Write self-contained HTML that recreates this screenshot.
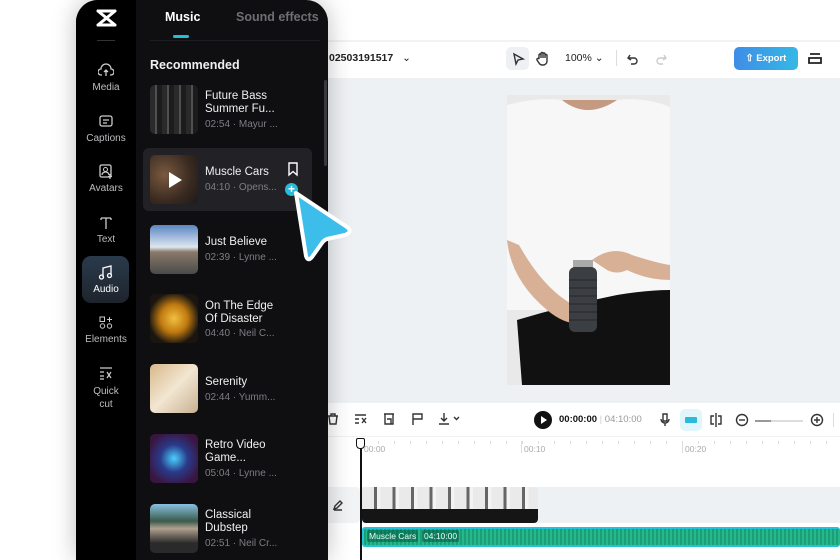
<!DOCTYPE html>
<html><head><meta charset="utf-8">
<style>
*{margin:0;padding:0;box-sizing:border-box}
body{width:840px;height:560px;overflow:hidden;background:#fff;font-family:"Liberation Sans",sans-serif;position:relative}
.abs{position:absolute}
#panel{left:76px;top:0;width:252px;height:560px;background:#0f0f11;border-radius:22px 22px 0 0;overflow:hidden;box-shadow:0 0 24px rgba(0,0,0,.25)}
#side{left:0;top:0;width:60px;height:560px;background:#000}
.nav{position:absolute;left:0;width:60px;text-align:center;color:#bdbdc2;font-size:10px}
.nav svg{display:block;margin:0 auto 4px}
.row{position:absolute;left:74px;width:170px;height:50px}
.th{position:absolute;left:0;top:0;width:48px;height:49px;border-radius:5px}
.t{position:absolute;left:55px;color:#f0f0f2;font-size:11.5px;line-height:13px;width:80px}
.m{position:absolute;left:55px;color:#7d7d84;font-size:10px;white-space:nowrap}
.ic{stroke:#333;fill:none;stroke-width:1.4}
</style></head><body>

<div class="abs" style="left:0;top:0;width:840px;height:40px;background:#fff"></div>
<div class="abs" style="left:328px;top:40px;width:512px;height:2px;background:#f2f2f4"></div>
<div class="abs" style="left:328px;top:42px;width:512px;height:36px;background:#fff"></div>
<div class="abs" style="left:329px;top:52px;font-size:10.5px;font-weight:bold;color:#222">02503191517 <span style="font-weight:normal;margin-left:6px">&#8964;</span></div>
<div class="abs" style="left:506px;top:47px;width:23px;height:23px;background:#eef0f3;border-radius:5px"></div>
<svg class="abs" style="left:511px;top:52px" width="14" height="14"><path class="ic" d="M3 2 L12 7 L7 8 L5 12 Z"/></svg>
<svg class="abs" style="left:535px;top:51px" width="15" height="15"><path class="ic" d="M4 8 V4 a1 1 0 0 1 2 0 V7 V2.5 a1 1 0 0 1 2 0 V7 V3 a1 1 0 0 1 2 0 V7 V4.5 a1 1 0 0 1 2 0 V10 a4 4 0 0 1 -4 4 H7 a4 4 0 0 1 -3 -2 L2 9 a1 1 0 0 1 2 -1z"/></svg>
<div class="abs" style="left:565px;top:52px;font-size:10.5px;color:#222">100% &#8964;</div>
<div class="abs" style="left:616px;top:50px;width:1px;height:16px;background:#ddd"></div>
<svg class="abs" style="left:626px;top:52px" width="14" height="14"><path class="ic" d="M4 3 L2 6 L5 8 M2 6 H8 a3 3 0 0 1 0 6 H5"/></svg>
<svg class="abs" style="left:654px;top:52px" width="14" height="14"><path d="M10 3 L12 6 L9 8 M12 6 H6 a3 3 0 0 0 0 6 H9" stroke="#ccc" fill="none" stroke-width="1.4"/></svg>
<div class="abs" style="left:734px;top:47px;width:64px;height:23px;border-radius:5px;background:linear-gradient(90deg,#3f8de6,#35b8e6);color:#fff;font-size:9.5px;font-weight:bold;text-align:center;line-height:23px">&#8679; Export</div>
<svg class="abs" style="left:807px;top:51px" width="16" height="16"><path d="M3 3 H13 M2 7 H14 V12 H2 Z" stroke="#222" fill="none" stroke-width="1.8"/></svg>

<div class="abs" style="left:328px;top:78px;width:512px;height:325px;background:#eef1f4"></div>
<svg class="abs" style="left:507px;top:95px" width="163" height="290" viewBox="0 0 163 290">
<rect width="163" height="290" fill="#e9e9ea"/>
<path d="M0 10 Q30 2 55 5 Q80 25 110 5 Q140 2 163 12 V215 H0Z" fill="#f7f7f7"/>
<path d="M55 5 Q80 25 110 5 Z" fill="#c49a80"/>
<path d="M10 225 Q60 210 110 200 Q140 195 163 195 V290 H15Z" fill="#111"/>
<path d="M0 145 Q4 185 40 215 Q60 232 80 228 Q92 220 75 214 Q40 200 12 150Z" fill="#d8b096"/>
<path d="M85 165 Q105 150 125 160 Q150 168 163 170 V185 Q140 185 120 175 Q110 180 100 175Z" fill="#d8b096"/>
<rect x="66" y="165" width="20" height="8" fill="#aaa"/>
<rect x="62" y="172" width="28" height="65" rx="6" fill="#3b3e42"/>
<g stroke="#2a2c2f" stroke-width="1.2"><path d="M62 185H90M62 193H90M62 201H90M62 209H90M62 217H90M62 225H90"/></g>
</svg>

<div class="abs" style="left:328px;top:403px;width:512px;height:157px;background:#fff"></div>
<svg class="abs" style="left:326px;top:412px" width="14" height="14"><path class="ic" d="M2 4H12M5 4V2H9V4M3 4L4 12H10L11 4"/></svg>
<svg class="abs" style="left:353px;top:412px" width="16" height="14"><path class="ic" d="M2 3H13M2 7H6M2 11H6M9 6L13 11M13 6L9 11"/></svg>
<svg class="abs" style="left:382px;top:412px" width="14" height="14"><path class="ic" d="M2 2H12M3 2V12H11V2M5 7H9V12"/></svg>
<svg class="abs" style="left:410px;top:412px" width="14" height="14"><path class="ic" d="M3 13V2H12V7H3"/></svg>
<svg class="abs" style="left:437px;top:411px" width="26" height="16"><path class="ic" d="M7 2V10M4 7L7 10L10 7M2 13H12M17 6L19.5 8.5L22 6"/></svg>
<div class="abs" style="left:534px;top:411px;width:18px;height:18px;border-radius:50%;background:#111"></div>
<div class="abs" style="left:541px;top:416px;width:0;height:0;border-left:6px solid #fff;border-top:4px solid transparent;border-bottom:4px solid transparent"></div>
<div class="abs" style="left:559px;top:414px;font-size:9.5px;font-weight:bold;color:#111">00:00:00 <span style="color:#ccc;font-weight:normal">|</span> <span style="color:#999;font-weight:normal">04:10:00</span></div>
<svg class="abs" style="left:658px;top:412px" width="14" height="16"><path class="ic" d="M5 2H9V9H5ZM3 7a4 4 0 0 0 8 0M7 11V14"/></svg>
<div class="abs" style="left:680px;top:409px;width:22px;height:22px;border-radius:5px;background:#e0f6fb"></div>
<div class="abs" style="left:685px;top:417px;width:12px;height:6px;background:#2bb9dc;border-radius:1px"></div>
<svg class="abs" style="left:708px;top:412px" width="16" height="16"><path class="ic" d="M8 1V15M6 4H3V12H6M10 4H13V12H10"/></svg>
<svg class="abs" style="left:734px;top:412px" width="16" height="16"><circle cx="8" cy="8" r="5.5" class="ic"/><path class="ic" d="M5 8H11"/></svg>
<div class="abs" style="left:755px;top:420px;width:48px;height:2px;background:#ddd"></div>
<div class="abs" style="left:755px;top:420px;width:16px;height:2px;background:#999"></div>
<svg class="abs" style="left:809px;top:412px" width="16" height="16"><circle cx="8" cy="8" r="5.5" class="ic"/><path class="ic" d="M5 8H11M8 5V11"/></svg>
<div class="abs" style="left:833px;top:413px;width:1px;height:14px;background:#ddd"></div>

<div class="abs" style="left:328px;top:436px;width:512px;height:1px;background:#f0f0f0"></div>
<div class="abs" style="left:364px;top:444px;font-size:8.5px;color:#aaa">00:00</div>
<div class="abs" style="left:524px;top:444px;font-size:8.5px;color:#aaa">00:10</div>
<div class="abs" style="left:685px;top:444px;font-size:8.5px;color:#aaa">00:20</div>
<div class="abs" style="left:521px;top:441px;width:1px;height:12px;background:#ddd"></div>
<div class="abs" style="left:682px;top:441px;width:1px;height:12px;background:#ddd"></div>
<div class="abs" style="left:362px;top:441px;width:470px;height:3px;background:repeating-linear-gradient(90deg,#ddd 0 1px,transparent 1px 16px)"></div>

<div class="abs" style="left:328px;top:487px;width:32px;height:36px;background:#f1f3f5;border-radius:0 4px 4px 0"></div>
<svg class="abs" style="left:332px;top:499px" width="12" height="12"><path class="ic" d="M2 10L3 7L8 2L10 4L5 9Z M2 11H10"/></svg>
<div class="abs" style="left:362px;top:487px;width:478px;height:36px;background:#eef1f4"></div>
<div class="abs" style="left:362px;top:487px;width:176px;height:36px;border-radius:4px;overflow:hidden;background:repeating-linear-gradient(90deg,#eaeaea 0 12px,#666 12px 15px,#f3f3f3 15px 18.5px);">
<div style="position:absolute;left:0;top:22px;width:176px;height:14px;background:#151515"></div>
</div>
<div class="abs" style="left:362px;top:527px;width:478px;height:20px;background:repeating-linear-gradient(90deg,#1a9f78 0 2px,#26b889 2px 4px);border:2px solid #22c3d8;border-right:none;border-radius:3px"></div>
<div class="abs" style="left:367px;top:530px;font-size:8.5px;color:#e6fff6;background:rgba(0,80,60,.5);padding:1px 2px;border-radius:2px">Muscle Cars</div>
<div class="abs" style="left:422px;top:530px;font-size:8.5px;color:#e6fff6;background:rgba(0,80,60,.5);padding:1px 2px;border-radius:2px">04:10:00</div>
<div class="abs" style="left:360px;top:444px;width:1.5px;height:116px;background:#111"></div>
<div class="abs" style="left:356px;top:438px;width:9px;height:11px;border:1.5px solid #111;border-radius:2px 2px 4px 4px;background:#fff"></div>

<div id="panel" class="abs">
 <div id="side" class="abs"></div>
 <svg class="abs" style="left:20px;top:9px" width="21" height="18"><path d="M2 2 L19 16 M19 2 L2 16 M2 2H19 M2 16H19" stroke="#fff" stroke-width="3" fill="none" stroke-linecap="round"/></svg>
 <div class="abs" style="left:21px;top:40px;width:18px;height:1px;background:#333"></div>
 <div class="nav" style="top:63px"><svg width="16" height="15"><path d="M4 12 H3 a3 3 0 0 1 0-6 a5 5 0 0 1 10 0 a3 3 0 0 1 0 6 H12 M8 13 V7 M6 9 L8 7 L10 9" stroke="#ccc" fill="none" stroke-width="1.3"/></svg>Media</div>
 <div class="nav" style="top:114px"><svg width="16" height="15"><rect x="2" y="2" width="12" height="10" rx="2" stroke="#ccc" fill="none" stroke-width="1.3"/><path d="M5 6H11M5 9H9" stroke="#ccc" stroke-width="1.3"/></svg>Captions</div>
 <div class="nav" style="top:164px"><svg width="16" height="15"><rect x="2" y="1" width="11" height="12" rx="1.5" stroke="#ccc" fill="none" stroke-width="1.3"/><circle cx="7.5" cy="5.5" r="2" stroke="#ccc" fill="none"/><path d="M4 11a3.5 3 0 0 1 7 0M12 10V15M10 12.5H14" stroke="#ccc" fill="none" stroke-width="1.3"/></svg>Avatars</div>
 <div class="nav" style="top:215px"><svg width="16" height="15"><path d="M3 3H13M8 3V14M3 3V5M13 3V5" stroke="#ccc" fill="none" stroke-width="1.3"/></svg>Text</div>
 <div class="abs" style="left:6px;top:256px;width:47px;height:47px;border-radius:9px;background:linear-gradient(#2a3a4c,#1e242c)"></div>
 <div class="nav" style="top:265px;color:#fff"><svg width="16" height="15"><path d="M5 12V3L13 1V10" stroke="#fff" fill="none" stroke-width="1.3"/><circle cx="3.5" cy="12" r="2" stroke="#fff" fill="none" stroke-width="1.3"/><circle cx="11.5" cy="10.5" r="2" stroke="#fff" fill="none" stroke-width="1.3"/></svg>Audio</div>
 <div class="nav" style="top:315px"><svg width="16" height="15"><rect x="2" y="2" width="4.5" height="4.5" stroke="#ccc" fill="none"/><circle cx="4.5" cy="11" r="2.2" stroke="#ccc" fill="none"/><circle cx="11.5" cy="11" r="2.2" stroke="#ccc" fill="none"/><path d="M9 4.5H14M11.5 2V7" stroke="#ccc"/></svg>Elements</div>
 <div class="nav" style="top:366px;line-height:13px"><svg width="16" height="15"><path d="M2 2H14M2 6H6M2 10H6M2 13H6M9 6L13 12M13 6L9 12" stroke="#ccc" fill="none" stroke-width="1.2"/></svg>Quick<br>cut</div>

 <div class="abs" style="left:89px;top:10px;color:#fff;font-size:12.5px;font-weight:bold">Music</div>
 <div class="abs" style="left:97px;top:35px;width:16px;height:3px;border-radius:2px;background:#1fc0d9"></div>
 <div class="abs" style="left:160px;top:10px;color:#6e6e74;font-size:12.5px;font-weight:bold;white-space:nowrap">Sound effects</div>
 <div class="abs" style="left:74px;top:40px;width:170px;height:1px;background:#1e1e22"></div>
 <div class="abs" style="left:74px;top:58px;color:#f0f0f2;font-size:12.5px;font-weight:bold">Recommended</div>
 <div class="abs" style="left:248px;top:80px;width:3px;height:86px;border-radius:2px;background:#3a3a3e"></div>

 <div class="abs" style="left:67px;top:148px;width:169px;height:63px;border-radius:6px;background:#222226"></div>

 <div class="row" style="top:85px"><div class="th" style="background:repeating-linear-gradient(90deg,#2a2a2a 0 5px,#505050 5px 7px,#1c1c1c 7px 12px)"></div><div class="t" style="top:5px">Future Bass Summer Fu...</div><div class="m" style="top:34px">02:54 · Mayur ...</div></div>
 <div class="row" style="top:155px"><div class="th" style="background:radial-gradient(circle at 30% 40%,#7a5a40,#3a2a20 60%,#1a1a18)"></div><div style="position:absolute;left:19px;top:17px;border-left:13px solid #fff;border-top:8px solid transparent;border-bottom:8px solid transparent"></div><div class="t" style="top:11px">Muscle Cars</div><div class="m" style="top:27px">04:10 · Opens...</div>
  <svg style="position:absolute;left:136px;top:6px" width="14" height="16"><path d="M3 2H11V14L7 10.5L3 14Z" stroke="#fff" fill="none" stroke-width="1.4"/></svg></div>
 <div class="row" style="top:225px"><div class="th" style="background:linear-gradient(#5a86c4 0,#dfe6ef 45%,#8a7a6a 55%,#4a4a4a 100%)"></div><div class="t" style="top:11px">Just Believe</div><div class="m" style="top:27px">02:39 · Lynne ...</div></div>
 <div class="row" style="top:294px"><div class="th" style="background:radial-gradient(ellipse at 50% 50%,#f2c040,#c07a10 40%,#1a1510 75%)"></div><div class="t" style="top:6px">On The Edge Of Disaster</div><div class="m" style="top:34px">04:40 · Neil C...</div></div>
 <div class="row" style="top:364px"><div class="th" style="background:linear-gradient(135deg,#d8b88a,#f2e6d2 50%,#c8b090)"></div><div class="t" style="top:12px">Serenity</div><div class="m" style="top:28px">02:44 · Yumm...</div></div>
 <div class="row" style="top:434px"><div class="th" style="background:radial-gradient(circle at 50% 50%,#4ad0ff,#2a3a8a 40%,#3a1540 80%)"></div><div class="t" style="top:5px">Retro Video Game...</div><div class="m" style="top:34px">05:04 · Lynne ...</div></div>
 <div class="row" style="top:504px"><div class="th" style="background:linear-gradient(#8ac0e0,#3a5a4a 35%,#b0a090 50%,#2a2a2a 80%)"></div><div class="t" style="top:5px">Classical Dubstep</div><div class="m" style="top:34px">02:51 · Neil Cr...</div></div>
</div>

<div class="abs" style="left:285px;top:183px;width:13px;height:13px;border-radius:50%;background:#2ab8dc;color:#fff;font-size:12px;line-height:12px;text-align:center;font-weight:bold">+</div>
<svg class="abs" style="left:285px;top:182px" width="75" height="85"><path d="M11 11 L62 45 Q68 50 60 53 L42 57 Q39 58 37 61 L27 75 Q23 80 21 74 Z" fill="#3dbde9" stroke="#fff" stroke-width="4" stroke-linejoin="round"/></svg>
</body></html>
